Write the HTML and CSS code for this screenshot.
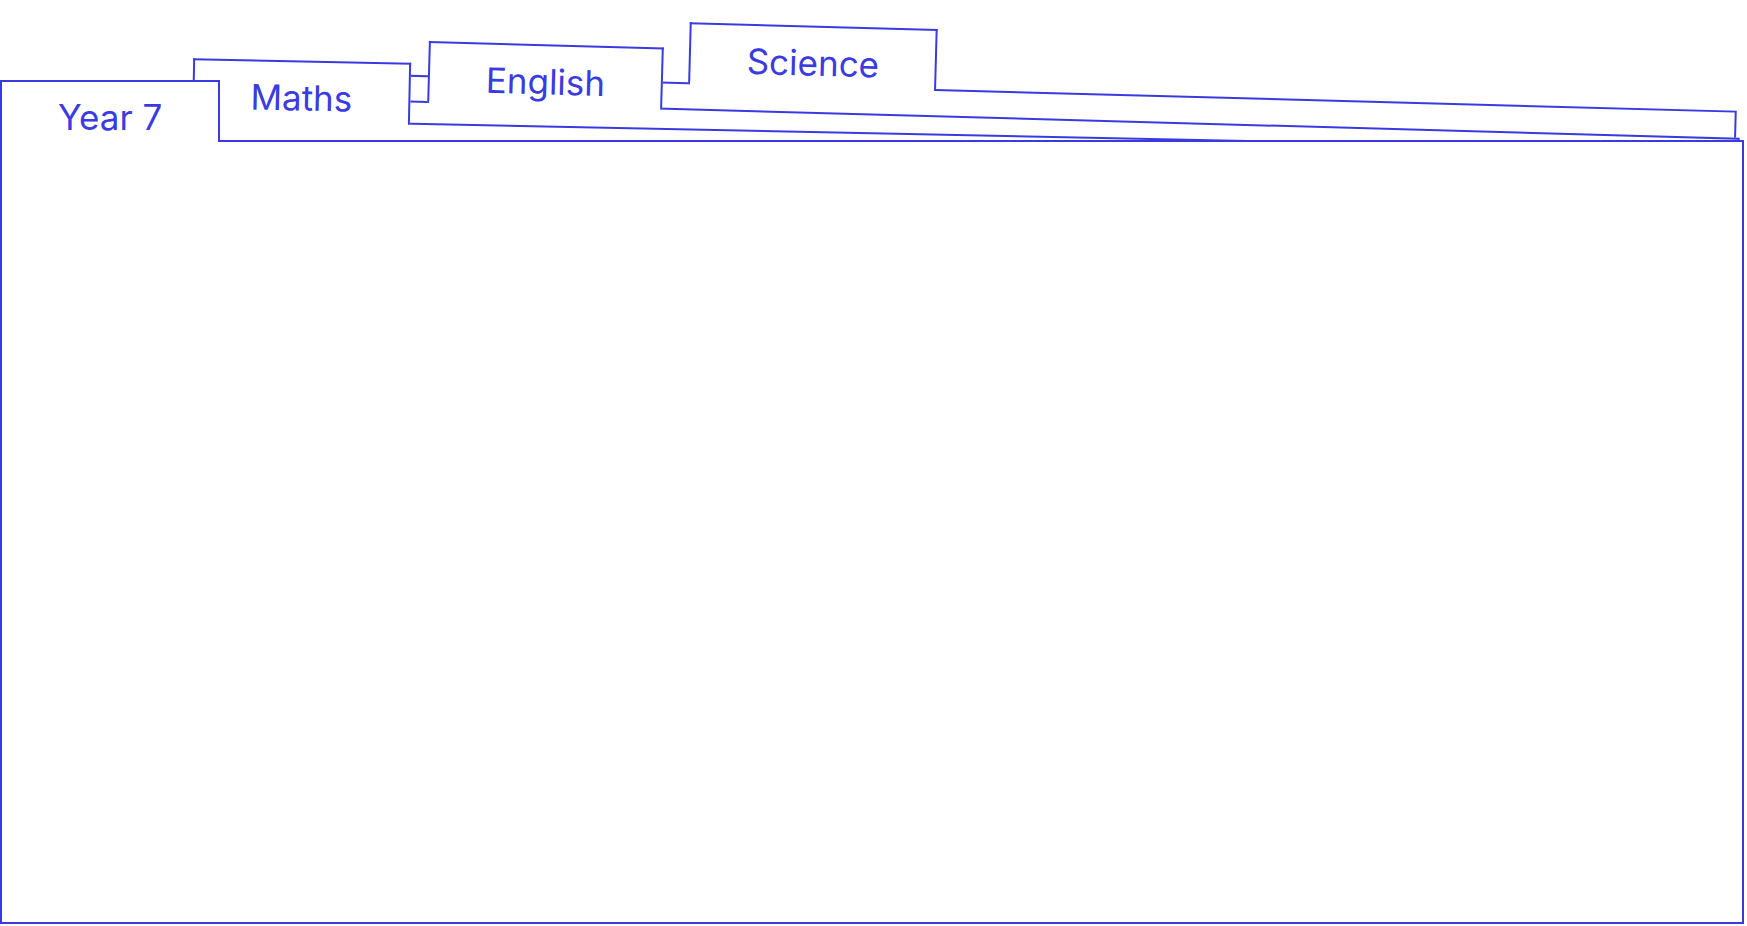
FILE: index.html
```html
<!DOCTYPE html>
<html>
<head>
    <title>Folders</title>
    <link rel="stylesheet" href="styles.css">
</head>

<body>
    <div class="stack">
        <section class="folder folder-science">
            <div class="tab">Science</div>
            <div class="sheet"></div>
        </section>
        <section class="folder folder-english">
            <div class="tab">English</div>
            <div class="sheet"></div>
        </section>
        <section class="folder folder-maths">
            <div class="tab">Maths</div>
            <div class="sheet"></div>
        </section>
        <section class="folder folder-year">
            <div class="tab">Year 7</div>
            <div class="sheet"></div>
        </section>
    </div>
</body>
</html>
```

FILE: styles.css
```css
html, body {margin: 0; padding: 0;}

body
{
    background: #fff;
    overflow: hidden;
    font-family: Inter, "Noto Sans", sans-serif;
}

.stack
{
    display: grid;
    width: 1747px;
    height: 926px;
    overflow: hidden;
}

/* every folder sits in the same cell, later ones on top */
.folder
{
    grid-area: 1 / 1;
    width: 1744px;
    display: flex;
    flex-direction: column;
    align-items: flex-start;
    transform-origin: 0 60px;
}

.tab
{
    position: relative;
    z-index: 1;
    box-sizing: border-box;
    height: 62px;
    margin-bottom: -2px;
    padding: 13px 56px 0;
    border: 2px solid #3a3ae3;
    border-bottom: none;
    background: #fff;
    color: #3b3be0;
    font-size: 35px;
    line-height: 44px;
    white-space: nowrap;
}

/* hides the sheet's top line where the tab joins it */
.tab::after
{
    content: "";
    position: absolute;
    left: 0;
    right: 0;
    bottom: -3px;
    height: 5px;
    background: #fff;
}

.sheet
{
    box-sizing: border-box;
    width: 100%;
    height: 700px;
    border: 2px solid #3a3ae3;
    background: #fff;
}

.folder-science {width: 1444px; transform: translate(293.3px, 11.6px) rotate(1.55deg);}
.folder-science .tab {margin-left: 395px;}

.folder-english {transform: translate(-3.6px, 29px) rotate(1.6deg);}
.folder-english .tab {margin-left: 431px;}

.folder-maths {transform: translate(-3px, 54.3px) rotate(1.18deg);}
.folder-maths .tab {margin-left: 195px;}

.folder-year {transform: translateY(80px);}
.folder-year .sheet {height: 784px;}
```
